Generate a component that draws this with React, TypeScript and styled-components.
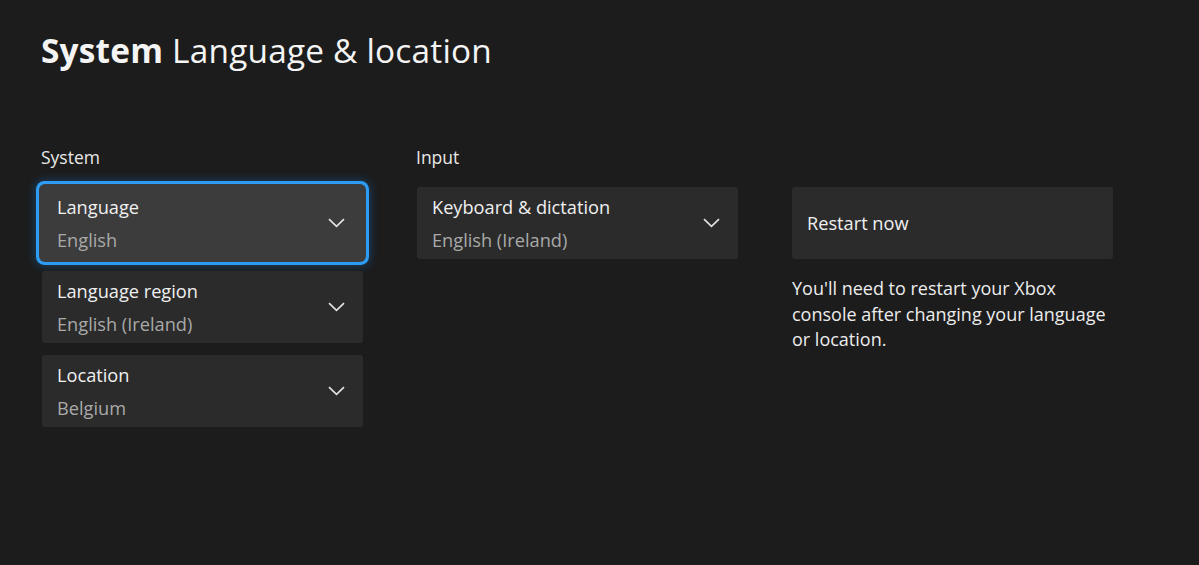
import React from "react";
import styled, { createGlobalStyle } from "styled-components";

const GlobalStyle = createGlobalStyle`
  html, body {
    margin: 0;
    padding: 0;
    background: #1c1c1c;
  }
  body {
    font-family: "Open Sans", "Noto Sans", sans-serif;
    color: #f2f2f2;
  }
`;

const Page = styled.div`
  width: 1199px;
  height: 565px;
  padding: 28px 0 0 41px;
  box-sizing: border-box;
  overflow: hidden;
`;

const Title = styled.h1`
  margin: 0;
  font-size: 33.4px;
  line-height: 44px;
  font-weight: 400;
  color: #f4f4f4;
  letter-spacing: 0.2px;

  b {
    font-weight: 700;
  }
`;

const Columns = styled.div`
  display: grid;
  grid-template-columns: repeat(3, 321px);
  column-gap: 54px;
  margin-top: 74px;
  margin-left: 1px;
`;

const Column = styled.div`
  display: flex;
  flex-direction: column;
`;

const SectionLabel = styled.div`
  font-size: 17.5px;
  line-height: 22px;
  height: 22px;
  margin-bottom: 19px;
  margin-left: -1px;
  color: #e8e8e8;
`;

const CardList = styled.div`
  display: flex;
  flex-direction: column;
  gap: 12px;
`;

const Card = styled.div<{ $focused?: boolean }>`
  height: 72px;
  box-sizing: border-box;
  padding: 10px 15px;
  border-radius: 3px;
  background: ${(p) => (p.$focused ? "#3c3c3c" : "#2b2b2b")};
  display: flex;
  align-items: center;
  justify-content: space-between;
  box-shadow: ${(p) =>
    p.$focused
      ? "0 0 0 3px #3c3c3c, 0 0 0 6px #2d9cf2, 0 0 10px 7px rgba(20, 130, 230, 0.35)"
      : "none"};
`;

const CardText = styled.div`
  display: flex;
  flex-direction: column;
`;

const CardLabel = styled.div`
  font-size: 18.2px;
  line-height: 22px;
  color: #f0f0f0;
`;

const CardValue = styled.div`
  margin-top: 11px;
  font-size: 18.2px;
  line-height: 22px;
  color: #a9a9a9;
`;

const ButtonCard = styled(Card)`
  font-size: 18.2px;
  line-height: 22px;
  color: #f0f0f0;
`;

const Chevron = styled.svg`
  width: 17px;
  height: 10px;
  margin-right: 3px;
  flex-shrink: 0;
`;

const Note = styled.p`
  margin: 17px 0 0;
  font-size: 18px;
  line-height: 25.5px;
  color: #ececec;
  width: 330px;
`;

function ChevronDown() {
  return (
    <Chevron viewBox="0 0 17 10">
      <path d="M1 1.2 L8.5 8.4 L16 1.2" fill="none" stroke="#e4e4e4" strokeWidth="1.6" />
    </Chevron>
  );
}

interface DropdownProps {
  label: string;
  value: string;
  focused?: boolean;
}

function Dropdown({ label, value, focused }: DropdownProps) {
  return (
    <Card $focused={focused}>
      <CardText>
        <CardLabel>{label}</CardLabel>
        <CardValue>{value}</CardValue>
      </CardText>
      <ChevronDown />
    </Card>
  );
}

export default function App() {
  return (
    <Page>
      <GlobalStyle />
      <Title>
        <b>System</b> Language &amp; location
      </Title>
      <Columns>
        <Column>
          <SectionLabel>System</SectionLabel>
          <CardList>
            <Dropdown label="Language" value="English" focused />
            <Dropdown label="Language region" value="English (Ireland)" />
            <Dropdown label="Location" value="Belgium" />
          </CardList>
        </Column>
        <Column>
          <SectionLabel>Input</SectionLabel>
          <CardList>
            <Dropdown label="Keyboard &amp; dictation" value="English (Ireland)" />
          </CardList>
        </Column>
        <Column>
          <SectionLabel />
          <CardList>
            <ButtonCard>Restart now</ButtonCard>
          </CardList>
          <Note>
            You'll need to restart your Xbox console after changing your language or location.
          </Note>
        </Column>
      </Columns>
    </Page>
  );
}
